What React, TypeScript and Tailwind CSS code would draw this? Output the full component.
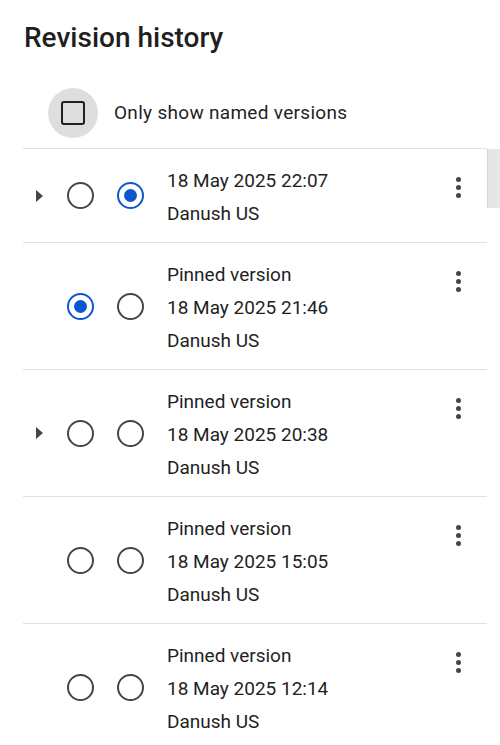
import { useState } from "react";

type Revision = {
  id: number;
  pinned: boolean;
  date: string;
  author: string;
  expandable: boolean;
};

const revisions: Revision[] = [
  { id: 1, pinned: false, date: "18 May 2025 22:07", author: "Danush US", expandable: true },
  { id: 2, pinned: true, date: "18 May 2025 21:46", author: "Danush US", expandable: false },
  { id: 3, pinned: true, date: "18 May 2025 20:38", author: "Danush US", expandable: true },
  { id: 4, pinned: true, date: "18 May 2025 15:05", author: "Danush US", expandable: false },
  { id: 5, pinned: true, date: "18 May 2025 12:14", author: "Danush US", expandable: false },
];

function Radio({ checked, onClick }: { checked: boolean; onClick: () => void }) {
  return (
    <button onClick={onClick} className="flex h-10 w-10 items-center justify-center">
      <span
        className={
          checked
            ? "flex h-[27px] w-[27px] items-center justify-center rounded-full border-[2.5px] border-[#0b57d0]"
            : "flex h-[27px] w-[27px] items-center justify-center rounded-full border-[2.5px] border-[#444746]"
        }
      >
        {checked && <span className="h-[13px] w-[13px] rounded-full bg-[#0b57d0]" />}
      </span>
    </button>
  );
}

function Kebab() {
  return (
    <button className="flex h-10 w-10 flex-col items-center justify-center gap-[3px]">
      <span className="h-[5px] w-[5px] rounded-full bg-[#444746]" />
      <span className="h-[5px] w-[5px] rounded-full bg-[#444746]" />
      <span className="h-[5px] w-[5px] rounded-full bg-[#444746]" />
    </button>
  );
}

export default function App() {
  const [namedOnly, setNamedOnly] = useState(false);
  const [left, setLeft] = useState(2);
  const [right, setRight] = useState(1);

  return (
    <main
      className="h-[745px] w-[500px] overflow-hidden bg-white text-[#1f1f1f]"
      style={{ fontFamily: "Roboto, 'Noto Sans', sans-serif" }}
    >
      <h1 className="pl-6 pt-[20px] text-[28px] font-medium leading-9">Revision history</h1>

      <div className="ml-[48px] mt-[32px] flex items-center">
        <button
          onClick={() => setNamedOnly(!namedOnly)}
          className="flex h-[50px] w-[50px] items-center justify-center rounded-full bg-[#dedede]"
        >
          <span className="h-6 w-6 rounded-[3px] border-[2.5px] border-[#1f1f1f]" />
        </button>
        <span className="ml-4 text-[19px] tracking-[0.3px]">Only show named versions</span>
      </div>

      <div className="mt-[10px] flex">
        <div className="ml-[23px] w-[464px]">
          {revisions.map((r) => (
            <div key={r.id} className="flex border-t border-[#e1e1e1]">
              <div className="flex items-center">
                <div className="flex w-[37px] justify-center">
                  {r.expandable && (
                    <span className="mr-[4px] h-0 w-0 border-y-[6.5px] border-l-[7px] border-y-transparent border-l-[#444746]" />
                  )}
                </div>
                <Radio checked={left === r.id} onClick={() => setLeft(r.id)} />
                <div className="w-[10px]" />
                <Radio checked={right === r.id} onClick={() => setRight(r.id)} />
              </div>
              <div className="ml-[17px] flex-1 pb-[12px] pt-[15px] text-[19px] leading-[33px]">
                {r.pinned && <div>Pinned version</div>}
                <div>{r.date}</div>
                <div>{r.author}</div>
              </div>
              <div className="mr-[9px] pt-[18px]">
                <Kebab />
              </div>
            </div>
          ))}
        </div>
        <div className="flex-1 pt-px">
          <div className="h-[59px] border-l border-[#d4d4d4] bg-[#e6e6e6]" />
        </div>
      </div>
    </main>
  );
}
